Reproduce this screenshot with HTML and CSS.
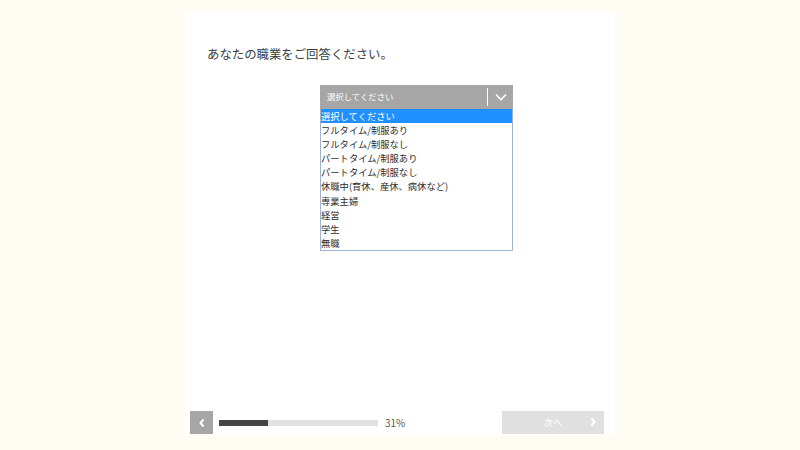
FILE: index.html
```html
<!DOCTYPE html>
<html lang="ja">
<head>
<meta charset="utf-8">
<link rel="stylesheet" href="styles.css">
</head>
<body>
<main class="card">
  <h1 class="question">あなたの職業をご回答ください。</h1>
  <div class="select-wrap">
    <div class="select">
      <span class="select-label">選択してください</span>
      <span class="select-divider"></span>
      <svg class="select-chevron" width="12" height="8" viewBox="0 0 12 8"><path d="M1 1.5 L6 6.5 L11 1.5" fill="none" stroke="#fff" stroke-width="1.6"/></svg>
    </div>
    <ul class="options">
      <li class="option selected">選択してください</li>
      <li class="option">フルタイム/制服あり</li>
      <li class="option">フルタイム/制服なし</li>
      <li class="option">パートタイム/制服あり</li>
      <li class="option">パートタイム/制服なし</li>
      <li class="option">休職中(育休、産休、病休など)</li>
      <li class="option">専業主婦</li>
      <li class="option">経営</li>
      <li class="option">学生</li>
      <li class="option">無職</li>
    </ul>
  </div>
  <div class="spacer"></div>
  <div class="footer">
    <button class="back"><svg width="8" height="10" viewBox="0 0 8 10"><path d="M5.5 1.5 L2.5 5 L5.5 8.5" fill="none" stroke="#fff" stroke-width="2"/></svg></button>
    <div class="progress"><div class="progress-fill" style="width:31%"></div></div>
    <span class="percent">31%</span>
    <div class="grow"></div>
    <button class="next"><span class="next-label">次へ</span><svg class="next-chevron" width="8" height="10" viewBox="0 0 8 10"><path d="M2.5 1.5 L5.5 5 L2.5 8.5" fill="none" stroke="#fff" stroke-width="2"/></svg></button>
  </div>
</main>
</body>
</html>
```
FILE: styles.css
```css
html, body {
  margin: 0;
  padding: 0;
  background: #fffcf4;
  font-family: "Noto Sans CJK JP", "Noto Sans", sans-serif;
}
.card {
  width: 430px;
  height: 423px;
  margin: 12px auto 0;
  background: #ffffff;
  display: flex;
  flex-direction: column;
  box-sizing: border-box;
  padding: 0 0 1px 0;
}
.question {
  margin: 35px 0 0 22px;
  font-size: 12.4px;
  line-height: 14px;
  font-weight: normal;
  color: #3c3c3c;
}
.select-wrap {
  margin: 24px 0 0 135px;
  width: 193px;
}
.select {
  height: 24px;
  background: #a6a6a6;
  display: flex;
  align-items: center;
  padding: 0 0 2px 7px;
  box-sizing: border-box;
}
.select-label {
  color: #ffffff;
  font-size: 8.4px;
  flex: 1;
}
.select-divider {
  width: 1px;
  height: 18px;
  margin-top: 2px;
  background: #ffffff;
}
.select-chevron {
  margin: 1px 6px 0 7px;
}
.options {
  list-style: none;
  margin: 0;
  padding: 0;
  border: 1px solid #9fb3cf;
  border-top: none;
}
.option {
  font-size: 9.3px;
  line-height: 14.1px;
  height: 14.1px;
  color: #2e2e2e;
  white-space: nowrap;
}
.option.selected {
  background: #1e90ff;
  color: #ffffff;
}
.spacer {
  flex: 1;
}
.footer {
  display: flex;
  align-items: center;
  padding: 0 11px 0 5px;
  height: 23px;
}
.back {
  width: 23px;
  height: 23px;
  border: none;
  padding: 0;
  background: #a6a6a6;
  display: flex;
  align-items: center;
  justify-content: center;
}
.progress {
  margin-left: 6px;
  width: 159px;
  height: 6px;
  background: #e2e2e2;
}
.progress-fill {
  height: 100%;
  background: #444444;
}
.percent {
  margin-left: 7px;
  font-size: 10px;
  color: #555555;
}
.grow {
  flex: 1;
}
.next {
  width: 102px;
  height: 23px;
  border: none;
  padding: 0;
  background: #e0e0e0;
  position: relative;
  display: flex;
  align-items: center;
  justify-content: center;
  font-family: "Noto Sans CJK JP", sans-serif;
}
.next-label {
  color: #ffffff;
  font-size: 9px;
}
.next-chevron {
  position: absolute;
  right: 7px;
  top: 6px;
}
```
